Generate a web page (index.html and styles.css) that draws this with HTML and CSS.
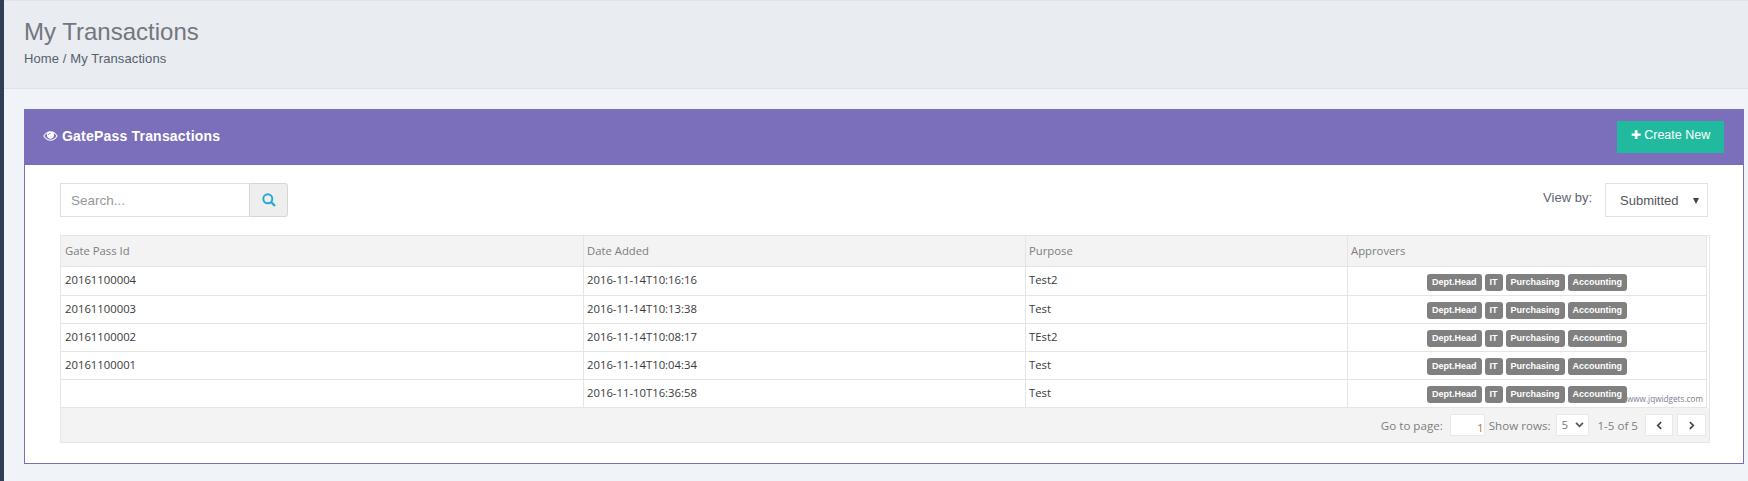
FILE: index.html
```html
<!DOCTYPE html>
<html lang="en">
<head>
    <meta charset="UTF-8">
    <title>My Transactions</title>
    <link rel="stylesheet" href="styles.css">
</head>
<body>
    <div class="sidebar"></div>
    <div class="content">
        <div class="page-head">
            <h1>My Transactions</h1>
            <p>Home / My Transactions</p>
        </div>
        <div class="panel">
            <div class="panel-head">
                <h2>
                    <svg class="eye" viewBox="0 0 16 11"><path fill-rule="evenodd" d="M0 5.5C2 2 4.800 .3 8 .3S14 2 16 5.500C14 9 11.200 10.700 8 10.700S2 9 0 5.500ZM1.300 5.500C2.900 8 5.200 9.600 8 9.600S13.100 8 14.700 5.500C13.800 4.100 12.700 3 11.300 2.200C11.800 2.900 12 3.700 12 4.500C12 6.800 10.200 8.600 8 8.600S4 6.800 4 4.500C4 3.700 4.200 2.900 4.700 2.200C3.300 3 2.200 4.100 1.300 5.500ZM7.700 2.200C6.500 2.200 5.600 3.100 5.600 4.200C5.600 4.500 5.800 4.700 6 4.700S6.500 4.500 6.500 4.200C6.500 3.600 7 3.100 7.700 3.100C8 3.100 8.200 2.900 8.200 2.700S8 2.200 7.700 2.200Z" fill="#fff"/></svg>
                    GatePass Transactions
                </h2>
                <button class="create-btn"><span class="plus">&#10010;</span> Create New</button>
            </div>
            <div class="panel-body">
                <div class="toolbar">
                    <div class="search">
                        <input type="text" placeholder="Search...">
                        <button class="search-btn">
                            <svg viewBox="0 0 14 14" width="14" height="14"><circle cx="5.800" cy="5.800" r="4.500" fill="none" stroke="#27a9d6" stroke-width="2"/><path d="M9 9l4 4" stroke="#27a9d6" stroke-width="2.400"/></svg>
                        </button>
                    </div>
                    <div class="view-by">
                        <span>View by:</span>
                        <div class="view-select">Submitted<i class="caret"></i></div>
                    </div>
                </div>
                <div class="grid">
                    <div class="row head">
                        <div class="cell">Gate Pass Id</div>
                        <div class="cell">Date Added</div>
                        <div class="cell">Purpose</div>
                        <div class="cell">Approvers</div>
                    </div>
                    <div class="row">
                        <div class="cell">20161100004</div>
                        <div class="cell">2016-11-14T10:16:16</div>
                        <div class="cell">Test2</div>
                        <div class="cell badges"><b>Dept.Head</b><b>IT</b><b>Purchasing</b><b>Accounting</b></div>
                    </div>
                    <div class="row">
                        <div class="cell">20161100003</div>
                        <div class="cell">2016-11-14T10:13:38</div>
                        <div class="cell">Test</div>
                        <div class="cell badges"><b>Dept.Head</b><b>IT</b><b>Purchasing</b><b>Accounting</b></div>
                    </div>
                    <div class="row">
                        <div class="cell">20161100002</div>
                        <div class="cell">2016-11-14T10:08:17</div>
                        <div class="cell">TEst2</div>
                        <div class="cell badges"><b>Dept.Head</b><b>IT</b><b>Purchasing</b><b>Accounting</b></div>
                    </div>
                    <div class="row">
                        <div class="cell">20161100001</div>
                        <div class="cell">2016-11-14T10:04:34</div>
                        <div class="cell">Test</div>
                        <div class="cell badges"><b>Dept.Head</b><b>IT</b><b>Purchasing</b><b>Accounting</b></div>
                    </div>
                    <div class="row">
                        <div class="cell"></div>
                        <div class="cell">2016-11-10T16:36:58</div>
                        <div class="cell">Test</div>
                        <div class="cell badges"><b>Dept.Head</b><b>IT</b><b>Purchasing</b><b>Accounting</b><span class="watermark">www.jqwidgets.com</span></div>
                    </div>
                    <div class="pager">
                        <span>Go to page:</span>
                        <div class="page-input">1</div>
                        <span>Show rows:</span>
                        <div class="rows-select">5
                            <svg viewBox="0 0 10 7" width="9" height="6"><path d="M1 1l4 4 4-4" fill="none" stroke="#555" stroke-width="2"/></svg>
                        </div>
                        <span class="count">1-5 of 5</span>
                        <div class="page-btn"><svg viewBox="0 0 7 10" width="6" height="9"><path d="M6 1L2 5l4 4" fill="none" stroke="#444" stroke-width="2"/></svg></div>
                        <div class="page-btn"><svg viewBox="0 0 7 10" width="6" height="9"><path d="M1 1l4 4-4 4" fill="none" stroke="#444" stroke-width="2"/></svg></div>
                    </div>
                </div>
            </div>
        </div>
    </div>
</body>
</html>
```

FILE: styles.css
```css
* {
    box-sizing: border-box;
}
body {
    margin: 0;
    height: 481px;
    overflow: hidden;
    display: flex;
    font-family: "Liberation Sans", Arial, sans-serif;
    background-color: #f0f3f8;
}
.sidebar {
    width: 4px;
    background: #2f3d57;
}
.content {
    flex: 1;
    min-width: 0;
}
.page-head {
    height: 89px;
    padding: 17px 20px 0;
    background: #e9ecf1;
    border-top: 1px solid #e2e4e8;
    border-bottom: 1px solid #dfe2e6;
}
.page-head h1 {
    margin: 0;
    font-size: 24px;
    line-height: 27px;
    font-weight: normal;
    color: #73767c;
}
.page-head p {
    margin: 6px 0 0;
    font-size: 13px;
    line-height: 15px;
    letter-spacing: 0.1px;
    color: #56606c;
}
.panel {
    margin: 20px 4px 0 20px;
    height: 355px;
    background: white;
    border: 1px solid #7b6fbc;
    border-top: 0;
}
.panel-head {
    height: 56px;
    margin: 0 -1px;
    padding: 12px 20px 0 19px;
    background: #7b6fbc;
    display: flex;
    justify-content: space-between;
}
.panel-head h2 {
    margin: 0;
    padding-top: 5px;
    font-size: 14px;
    line-height: 20px;
    letter-spacing: 0.2px;
    color: white;
    display: flex;
    align-items: center;
    height: 25px;
}
.eye {
    width: 15px;
    height: 10px;
    margin-right: 4px;
}
.create-btn {
    width: 107px;
    height: 32px;
    border: 0;
    padding: 0 0 4px;
    background: #21ba9f;
    color: white;
    font-family: inherit;
    font-size: 12.500px;
}
.plus {
    font-size: 12px;
}
.panel-body {
    padding: 18px 33px 0 35px;
}
.toolbar {
    display: flex;
    justify-content: space-between;
    padding-right: 2px;
}
.search {
    display: flex;
    width: 228px;
    height: 34px;
}
.search input {
    width: 189px;
    border: 1px solid #dfe1e5;
    border-right: 0;
    padding: 0 10px;
    font-family: inherit;
    font-size: 13.500px;
}
.search input::placeholder {
    color: #95989c;
}
.search-btn {
    width: 39px;
    padding: 3px 0 0;
    background: #eeeeee;
    border: 1px solid #d5d6d8;
    border-radius: 0 3px 3px 0;
}
.view-by {
    display: flex;
    gap: 13px;
    font-size: 13px;
    color: #5b6470;
}
.view-by span {
    line-height: 30px;
}
.view-select {
    position: relative;
    width: 103px;
    height: 34px;
    padding-left: 14px;
    line-height: 34px;
    border: 1px solid #dfe2e6;
    color: #56565a;
}
.caret {
    position: absolute;
    top: 14px;
    right: 8px;
    border: 3px solid transparent;
    border-top: 6px solid #444;
    border-bottom: 0;
}
.grid {
    margin-top: 18px;
    width: 1650px;
    height: 208px;
    border: 1px solid #e5e5e5;
    font-family: "Open Sans", sans-serif;
    font-size: 11.3px;
    color: #3a3a3a;
}
.row {
    display: grid;
    grid-template-columns: 523px 442px 322px 1fr;
    height: 28px;
    margin-right: 2px;
    border-bottom: 1px solid #e5e5e5;
    border-right: 1px solid #e5e5e5;
}
.row.head {
    height: 31px;
    background: #f3f3f3;
    color: #7d7d7d;
}
.head + .row {
    height: 29px;
}
.cell {
    padding-left: 4px;
    line-height: 26px;
    border-right: 1px solid #e5e5e5;
    white-space: nowrap;
}
.cell + .cell {
    padding-left: 3px;
}
.head .cell {
    line-height: 29px;
}
.cell:last-child {
    border-right: 0;
}
.cell.badges {
    position: relative;
    padding: 6px 0 0 79px;
    display: flex;
    gap: 3px;
}
.head + .row .badges {
    padding-top: 7px;
}
.badges b {
    height: 17px;
    padding: 0 5px;
    border-radius: 3px;
    background: #808080;
    color: white;
    font-family: "Liberation Sans", Arial, sans-serif;
    font-size: 9px;
    line-height: 17px;
}
.watermark {
    position: absolute;
    top: 12px;
    right: 3px;
    font-size: 8.200px;
    line-height: 13px;
    color: #7d7d90;
}
.pager {
    height: 34px;
    background: #f3f3f3;
    display: flex;
    justify-content: flex-end;
    align-items: center;
    padding-right: 3px;
    font-size: 11.600px;
    color: #7d7d7d;
}
.page-input {
    width: 35px;
    height: 22px;
    margin: 0 4px 0 7px;
    background: white;
    border: 1px solid #e8e8e8;
    text-align: right;
    line-height: 26px;
    color: #a67c52;
}
.rows-select {
    width: 33px;
    height: 22px;
    margin: 0 8px 0 6px;
    padding-left: 4px;
    background: white;
    border: 1px solid #e8e8e8;
    line-height: 20px;
    display: flex;
    align-items: center;
    gap: 7px;
}
.count {
    margin-right: 7px;
}
.page-btn {
    width: 29px;
    height: 22px;
    margin-left: 4px;
    background: white;
    border: 1px solid #e8e8e8;
    display: flex;
    align-items: center;
    justify-content: center;
}
.count + .page-btn {
    width: 28px;
    margin-left: 0;
}
```
